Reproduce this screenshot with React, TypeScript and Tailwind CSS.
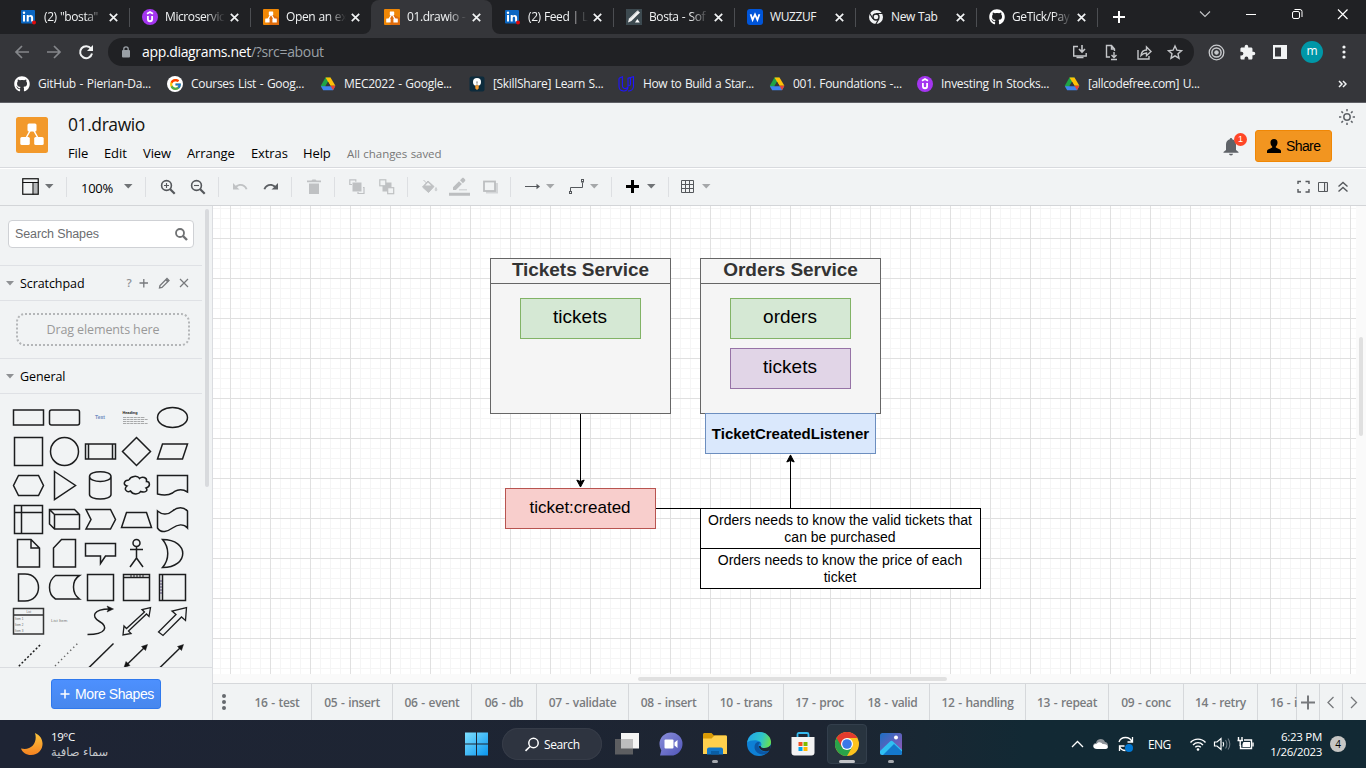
import React from "react";
import { FaGithub } from "react-icons/fa";
import { FcGoogle } from "react-icons/fc";

const UI = "font-['Open_Sans','Noto_Sans',sans-serif]";
const ARIAL = "font-['Liberation_Sans',sans-serif]";

/* ---------- brand icons ---------- */

const LinkedIn = () => (
  <svg width="16" height="16" viewBox="0 0 16 16" className="shrink-0">
    <rect x="0" y="1" width="14" height="13.5" rx="1" fill="#0a66c2" />
    <rect x="2" y="6" width="2" height="6.5" fill="#fff" />
    <circle cx="3" cy="3.8" r="1.2" fill="#fff" />
    <path d="M5.7 12.5V6h2v.9c.9-1.5 4.4-1.5 4.4 1.7v3.9h-2V9c0-1.8-2.4-1.7-2.4 0v3.5z" fill="#fff" />
    <circle cx="13" cy="13.6" r="2" fill="#e00b0b" />
  </svg>
);

const Udemy = () => (
  <svg width="16" height="16" viewBox="0 0 16 16" className="shrink-0">
    <circle cx="8" cy="8" r="8" fill="#a435f0" />
    <path d="M5 4.8 8 3l3 1.8M5.9 7v3.2c0 2.7 4.2 2.7 4.2 0V7" fill="none" stroke="#fff" strokeWidth="1.8" />
  </svg>
);

const DrawioSmall = () => (
  <svg width="16" height="16" viewBox="0 0 16 16" className="shrink-0">
    <rect width="16" height="16" rx="1" fill="#f08705" />
    <path d="M16 9v7H7l-3-3 4-8z" fill="#df6c0c" />
    <path d="M8 5 4.5 11M8 5l3.5 6" stroke="#fff" strokeWidth="1.3" />
    <rect x="5.8" y="2.5" width="4.4" height="3.8" rx=".5" fill="#fff" />
    <rect x="2.2" y="9.6" width="4.4" height="3.8" rx=".5" fill="#fff" />
    <rect x="9.4" y="9.6" width="4.4" height="3.8" rx=".5" fill="#fff" />
  </svg>
);

const BostaIcon = () => (
  <svg width="16" height="16" viewBox="0 0 16 16" className="shrink-0">
    <rect width="16" height="16" fill="#3d4a50" />
    <path d="M2 13.5 3 9.5l8.5-8 2.5 2-8.6 8.6z" fill="#f4f4f4" />
    <path d="m4 9.5 8-8" stroke="#b9bdbf" strokeWidth="1" />
    <path d="M9 13.5h4.8L11.4 10z" fill="#fff" />
  </svg>
);

const Wuzzuf = () => (
  <svg width="16" height="16" viewBox="0 0 16 16" className="shrink-0">
    <rect width="16" height="16" rx="3" fill="#0055d9" />
    <path d="m3.6 5.2 2 5.6L8 5.4l2.4 5.4 2-5.6" fill="none" stroke="#fff" strokeWidth="1.8" />
  </svg>
);

const ChromeGray = () => (
  <svg width="16" height="16" viewBox="0 0 16 16" className="shrink-0">
    <circle cx="8" cy="8" r="7" fill="#f1f3f4" />
    <circle cx="8" cy="8" r="3.7" fill="#202124" />
    <circle cx="8" cy="8" r="2.3" fill="#f1f3f4" />
    <path d="M8 4.5h7M4.9 9.7 1.5 4M11 9.7 7.6 15.5" stroke="#202124" strokeWidth="1.2" />
  </svg>
);

const Drive = () => (
  <svg width="16" height="16" viewBox="0 0 16 16" className="shrink-0">
    <path d="M5.5 1.5h5L8 6 3.3 14 .8 9.7z" fill="#1ea446" />
    <path d="M5.5 1.5h5l4.9 8.3h-5z" fill="#ffc107" />
    <path d="M3.2 14.3.9 10.2h14.4L13 14.3z" fill="#3f83f0" />
    <path d="M10.5 9.8h4.9L13 14.3z" fill="#ea4335" />
    <path d="m8 5.8 2.5 4.2h-5z" fill="#35363a" />
  </svg>
);

const Bulb = () => (
  <svg width="16" height="16" viewBox="0 0 16 16" className="shrink-0">
    <rect x=".5" y=".5" width="15" height="15" rx="2" fill="#0d2b3c" />
    <circle cx="8" cy="6" r="4" fill="#fff" />
    <path d="M6.3 9h3.4v3.5L8 14l-1.700-1.500z" fill="#f29a2e" />
    <path d="M7 6h2M8 6v4" stroke="#888" strokeWidth=".8" />
  </svg>
);

const Udacity = () => (
  <svg width="17" height="16" viewBox="0 0 17 16" className="shrink-0">
    <path
      d="M1 2.2 4.4.8v9c0 2.8 3.6 3.8 5.3 1.4M1 2.2v8c0 5.8 9 6.8 9 .6V2.2L15.5.8v9.4c0 3-2.7 4.8-5.5 4.8M10 8c0 2 2.5 2 2.5 0V1.5"
      fill="none"
      stroke="#2015ff"
      strokeWidth="1.1"
    />
  </svg>
);

/* ---------- browser ---------- */

const X = ({ c = "" }: { c?: string }) => (
  <svg width="9" height="9" viewBox="0 0 9 9" className={`shrink-0 ${c}`}>
    <path d="m.8.8 7.4 7.4M8.2.8.8 8.2" stroke="#f1f3f4" strokeWidth="1.7" />
  </svg>
);

const GithubIcon = () => <FaGithub size={16} color="#fff" className="shrink-0" />;

const tabs: { icon: React.FC; title: string; sep?: boolean; active?: boolean; fade?: boolean }[] = [
  { icon: LinkedIn, title: '(2) "bosta"', sep: true, fade: true },
  { icon: Udemy, title: "Microservic", sep: true, fade: true },
  { icon: DrawioSmall, title: "Open an ex", sep: true, fade: true },
  { icon: DrawioSmall, title: "01.drawio -", active: true, fade: true },
  { icon: LinkedIn, title: "(2) Feed | L", sep: true, fade: true },
  { icon: BostaIcon, title: "Bosta - Sof", sep: true, fade: true },
  { icon: Wuzzuf, title: "WUZZUF", sep: true },
  { icon: ChromeGray, title: "New Tab", sep: true },
  { icon: GithubIcon, title: "GeTick/Pay", sep: true, fade: true },
];

const TabStrip = () => (
  <div className="flex h-[34px] bg-[#202124] pl-[8px]">
    {tabs.map((t, i) => {
      const Icon = t.icon;
      const hasSep = t.sep && i !== 2;
      return (
        <div
          key={i}
          className={`relative flex h-[34px] w-[121px] shrink-0 items-center pl-[13px] ${t.active ? "rounded-t-[8px] bg-[#35363a]" : ""}`}
        >
          {t.active && (
            <>
              <svg className="absolute -left-2 bottom-0" width="8" height="8"><path d="M8 0v8H0a8 8 0 0 0 8-8z" fill="#35363a" /></svg>
              <svg className="absolute -right-2 bottom-0" width="8" height="8"><path d="M0 0v8h8a8 8 0 0 1-8-8z" fill="#35363a" /></svg>
            </>
          )}
          <Icon />
          <span
            className={`ml-[7px] w-[60px] whitespace-nowrap text-[12px] leading-[16px] tracking-[-0.4px] text-[#f1f3f4] [word-spacing:0.5px] ${
              t.fade ? "[mask-image:linear-gradient(to_right,black_68%,transparent_100%)]" : ""
            }`}
          >
            {t.title}
          </span>
          <X c="ml-[5px]" />
          {hasSep && <span className="absolute right-[-1px] top-[8px] h-[19px] w-px bg-[#4c4e52]" />}
        </div>
      );
    })}
    <svg width="14" height="14" viewBox="0 0 14 14" className="ml-[15px] mt-[10px]">
      <path d="M7 1v12M1 7h12" stroke="#fff" strokeWidth="2" />
    </svg>
    <svg width="160" height="30" viewBox="0 0 160 30" className="ml-[73px]" fill="none" stroke="#fff">
      <path d="m1 11.500 5 5 5-5" stroke="#c4c6c8" strokeWidth="1.1" />
      <path d="M47 14.500h10" />
      <rect x="93.500" y="11.500" width="7" height="7" rx="1.500" />
      <path d="M95.500 9.500h5.500a2 2 0 0 1 2 2v5.500" />
      <path d="m139 9.500 9.500 9.500m0-9.500L139 19" strokeWidth="1.2" />
    </svg>
  </div>
);

const AddressBar = () => (
  <div className="flex h-9 items-center bg-[#35363a]">
    <svg width="80" height="20" viewBox="0 0 80 20" className="ml-[14px] shrink-0" fill="none">
      <path d="M15 10H2m6-6-6 6 6 6" stroke="#85878b" strokeWidth="1.700" />
      <path d="M33 10h13m-6-6 6 6-6 6" stroke="#85878b" strokeWidth="1.700" />
      <path d="M77 6.600A6 6 0 1 0 78 11.500" stroke="#f1f3f4" strokeWidth="2" />
      <path d="M79 3v6h-6z" fill="#f1f3f4" />
    </svg>
    <div className="ml-[14px] flex h-7 w-[1086px] shrink-0 items-center rounded-full bg-[#202124] pl-[13px]">
      <svg width="10" height="12" viewBox="0 0 10 12" className="shrink-0">
        <rect x="1" y="4" width="8" height="7.500" rx="1" fill="#9aa0a6" />
        <path d="M2.800 4.500V3a2.200 2.200 0 0 1 4.400 0v1.500" fill="none" stroke="#9aa0a6" strokeWidth="1.300" />
      </svg>
      <span className="ml-[11px] w-[930px] text-[14px] leading-5 tracking-[-0.34px] text-white">
        app.diagrams.net<span className="text-[#9aa0a6]">/?src=about</span>
      </span>
      <svg width="112" height="18" viewBox="0 0 112 18" className="shrink-0" fill="none" stroke="#c4c6c9" strokeWidth="1.400">
        <path d="M6 3.500H1.700v9.500h12.500V10" />
        <path d="M4.500 14.500h7M10 2v6.500M7 6l3 3 3-3" strokeWidth="1.600" />
        <path d="M38 14h-3.500V2.500h5l3 3.500V8M39.500 2.500V6H42" />
        <path d="M42 9v5.500M39.500 12l2.500 2.500 2.500-2.500M39 16.500h6" />
        <path d="M66 7v9h11v-3" />
        <path d="M69 12.500c.5-4 2.500-5.500 5.500-5.500V4l4.500 4.500-4.500 4.200V10c-3 0-4 1-5.500 2.500z" />
        <path d="m104 3 1.900 4.200 4.600.5-3.500 3 1 4.500-4-2.400-4 2.400 1-4.500-3.500-3 4.600-.5z" transform="translate(-1 0)" />
      </svg>
    </div>
    <svg width="17" height="17" viewBox="0 0 17 17" className="ml-[14px] shrink-0" fill="none" stroke="#c8cacd">
      <circle cx="8.500" cy="8.500" r="7.300" strokeWidth="1.300" />
      <circle cx="8.500" cy="8.500" r="4.600" strokeWidth="1.500" />
      <circle cx="8.500" cy="8.500" r="1.800" fill="#c8cacd" />
    </svg>
    <svg width="17" height="17" viewBox="0 0 24 24" className="ml-[14px] shrink-0">
      <path fill="#f1f3f4" d="M20.500 11H19V7c0-1.100-.9-2-2-2h-4V3.500a2.500 2.500 0 0 0-5 0V5H4c-1.100 0-2 .9-2 2v3.800h1.500a2.700 2.700 0 0 1 0 5.400H2V20c0 1.100.9 2 2 2h3.800v-1.500a2.700 2.700 0 0 1 5.400 0V22H17c1.100 0 2-.9 2-2v-4h1.500a2.500 2.500 0 0 0 0-5z" />
    </svg>
    <svg width="14" height="14" viewBox="0 0 14 14" className="ml-[17px] shrink-0">
      <path d="M0 0h14v14H0zM2 2.500v9h6v-9z" fill="#f1f3f4" fillRule="evenodd" />
    </svg>
    <span className="ml-[14px] flex h-[22px] w-[22px] shrink-0 items-center justify-center rounded-full bg-[#0097a7] pb-[2px] text-[12px] leading-none text-white">m</span>
    <svg width="4" height="14" viewBox="0 0 4 14" className="ml-[19px] shrink-0" fill="#f1f3f4">
      <circle cx="2" cy="2" r="1.600" /><circle cx="2" cy="7" r="1.600" /><circle cx="2" cy="12" r="1.600" />
    </svg>
  </div>
);

const bookmarks: { icon: React.ReactNode; label: string; w: string; t?: string }[] = [
  { icon: <GithubIcon />, label: "GitHub - Pierian-Da...", w: "w-[153px]" },
  { icon: <span className="flex h-4 w-4 shrink-0 items-center justify-center rounded-full bg-white"><FcGoogle size={13} /></span>, label: "Courses List - Goog...", w: "w-[153px]" },
  { icon: <Drive />, label: "MEC2022 - Google...", w: "w-[149px]" },
  { icon: <Bulb />, label: "[SkillShare] Learn S...", w: "w-[149px]", t: "tracking-[-0.33px]" },
  { icon: <Udacity />, label: "How to Build a Star...", w: "w-[151px]", t: "tracking-[-0.4px]" },
  { icon: <Drive />, label: "001. Foundations -...", w: "w-[148px]" },
  { icon: <Udemy />, label: "Investing In Stocks...", w: "w-[147px]" },
  { icon: <Drive />, label: "[allcodefree.com] U...", w: "w-[274px]", t: "tracking-[-0.36px]" },
];

const BookmarksBar = () => (
  <div className="flex h-8 items-center bg-[#35363a] pb-[4px] pl-[14px]">
    {bookmarks.map((b, i) => (
      <div key={i} className={`flex shrink-0 items-center gap-[8px] ${b.w}`}>
        {b.icon}
        <span className={`whitespace-nowrap text-[12px] leading-4 text-[#f1f3f4] [word-spacing:0.8px] ${b.t || "tracking-[-0.28px]"}`}>{b.label}</span>
      </div>
    ))}
    <svg width="9" height="8" viewBox="0 0 9 8" fill="none" stroke="#f1f3f4" strokeWidth="1.500">
      <path d="m1 1 3 3-3 3M5 1l3 3-3 3" />
    </svg>
  </div>
);

/* ---------- editor header ---------- */

const menus = [
  ["File", "w-[36px]"],
  ["Edit", "w-[39px]"],
  ["View", "w-[44px]"],
  ["Arrange", "w-[64px]"],
  ["Extras", "w-[52px]"],
  ["Help", "w-[44px]"],
];

const EditorHeader = () => (
  <div className="flex h-[65px] border-b border-[#d8dade] bg-[#f1f3f4]">
    <svg width="32" height="36" viewBox="0 0 32 36" className="ml-[16px] mt-[14px] shrink-0">
      <rect width="32" height="36" rx="2.500" fill="#f2992b" />
      <path d="M15 12 9.500 22M17 12l5.500 10" stroke="#fff" strokeWidth="1.500" />
      <rect x="11.500" y="6.500" width="9" height="8" rx="1.500" fill="#fff" />
      <rect x="4.300" y="20" width="9.500" height="8" rx="1.500" fill="#fff" />
      <rect x="18.200" y="20" width="9.500" height="8" rx="1.500" fill="#fff" />
    </svg>
    <div className="ml-[20px] w-[1155px] shrink-0">
      <div className="mt-[9px] text-[17.500px] leading-6 tracking-[-0.42px] text-[#111]">01.drawio</div>
      <div className="mt-[9px] flex h-[18px] items-center text-[13px] text-black">
        {menus.map(([m, w]) => (
          <span key={m} className={`shrink-0 tracking-[-0.1px] ${w}`}>{m}</span>
        ))}
        <span className="whitespace-nowrap text-[11.500px] tracking-[-0.05px] text-[#777] [word-spacing:0.5px]">All changes saved</span>
      </div>
    </div>
    <div className="relative mt-[33px] h-[24px] w-[32px] shrink-0">
      <svg width="16" height="18" viewBox="0 0 16 18" className="mt-[2px]" fill="#5f6368">
        <path d="M8 0c.8 0 1.200.6 1.200 1.300C11.800 2 13 4 13 6.500V12l2.500 2v.7H.5V14L3 12V6.500C3 4 4.200 2 6.800 1.300 6.800.6 7.200 0 8 0z" />
        <path d="M6 15.800h4a2 1.600 0 0 1-4 0z" />
      </svg>
      <span className="absolute left-[11px] top-[-3px] flex h-[13px] w-[13px] items-center justify-center rounded-full bg-[#ff4627] font-['Liberation_Sans',sans-serif] text-[9px] leading-none text-white">1</span>
    </div>
    <div className={`mt-[27px] flex h-8 w-[77px] shrink-0 items-center rounded-[3px] border border-[#f08705] bg-[#f29520] pl-[11px] text-[14px] text-black ${ARIAL}`}>
      <svg width="14" height="14" viewBox="0 0 14 14" className="shrink-0">
        <path d="M7 0c2.300 0 3.500 1.500 3.500 3.500S9.500 7 8.800 7.600v1L13 10.500c.7.400 1 1 1 1.700V14H0v-1.800c0-.7.300-1.300 1-1.700l4.200-1.900v-1C4.500 7 3.500 5.500 3.500 3.500S4.700 0 7 0z" />
      </svg>
      <span className="ml-[5px] tracking-[-0.6px]">Share</span>
    </div>
    <svg width="16" height="16" viewBox="0 0 16 16" className="ml-[7px] mt-[6px] shrink-0" fill="none" stroke="#5f6368" strokeWidth="1.500">
      <circle cx="8" cy="8" r="3.200" />
      <path d="M8 0v2.300M8 13.700V16M0 8h2.300M13.700 8H16M2.400 2.400 4 4M12 12l1.600 1.600M13.600 2.400 12 4M4 12l-1.600 1.600" />
    </svg>
  </div>
);

/* ---------- toolbar ---------- */

const Caret = ({ c, dim }: { c: string; dim?: boolean }) => (
  <svg width="9" height="5" viewBox="0 0 9 5" className={`mr-[-1px] shrink-0 ${c}`}>
    <path d="M0 0h8.500L4.250 4.600z" fill={dim ? "#a5a7a9" : "#707376"} />
  </svg>
);
const Sep = ({ c }: { c: string }) => <span className={`h-[20px] w-px shrink-0 bg-[#dddfe2] ${c}`} />;

const Toolbar = () => (
  <div className="flex h-[38px] items-center border-b border-t border-b-[#d3d5d8] border-t-white bg-[#f1f3f4] pb-px pl-[22px]">
    <svg width="17" height="17" viewBox="0 0 17 17" className="shrink-0" fill="none" stroke="#111">
      <rect x="11.500" y="4.500" width="4.500" height="11.500" fill="#b5b7b9" stroke="none" />
      <rect x=".75" y=".75" width="15.500" height="15.500" strokeWidth="1.200" />
      <path d="M.5 4.500h16M11 4.500v12" strokeWidth="1.100" />
    </svg>
    <Caret c="ml-[6px]" />
    <Sep c="ml-[13px]" />
    <span className="ml-[14px] mt-[4px] w-[34px] shrink-0 text-[13px] tracking-[-0.25px] text-black">100%</span>
    <Caret c="ml-[9px]" />
    <Sep c="ml-[13px]" />
    <svg width="16" height="16" viewBox="0 0 16 16" className="ml-[14px] shrink-0" fill="none" stroke="#55585c">
      <circle cx="6.500" cy="6.500" r="4.900" strokeWidth="1.600" /><path d="m10 10 4.700 4.700" strokeWidth="2.200" /><path d="M4 6.500h5M6.500 4v5" strokeWidth="1.100" />
    </svg>
    <svg width="16" height="16" viewBox="0 0 16 16" className="ml-[14px] shrink-0" fill="none" stroke="#55585c">
      <circle cx="6.500" cy="6.500" r="4.900" strokeWidth="1.600" /><path d="m10 10 4.700 4.700" strokeWidth="2.200" /><path d="M4 6.500h5" strokeWidth="1.100" />
    </svg>
    <Sep c="ml-[12px]" />
    <svg width="16" height="10" viewBox="0 0 16 10" className="ml-[13px] shrink-0">
      <path d="M1 1v6.500h6.500L5 5.200c3-2.500 7-1.500 8.700 2.300L15.500 7C13.500 2 8 .5 3.700 3.800z" fill="#c0c2c4" />
    </svg>
    <svg width="16" height="10" viewBox="0 0 16 10" className="ml-[15px] shrink-0">
      <path d="M15 1v6.500H8.500L11 5.200C8 2.700 4 3.700 2.300 7.500L.5 7C2.500 2 8 .5 12.300 3.800z" fill="#5c5f63" />
    </svg>
    <Sep c="ml-[12px]" />
    <svg width="14" height="16" viewBox="0 0 14 16" className="ml-[15px] shrink-0" fill="#bfc1c3">
      <path d="M0 1.500h4.500L5.500.5h3l1 1H14v1.700H0zM2 4.500h10V15H2z" />
    </svg>
    <Sep c="ml-[13px]" />
    <svg width="16" height="16" viewBox="0 0 16 16" className="ml-[14px] shrink-0" fill="none" stroke="#bfc1c3">
      <path d="M3 5.500H.8V.8h6v2" strokeWidth="1.200" /><rect x="3.500" y="3.500" width="9" height="9" fill="#bfc1c3" stroke="none" /><path d="M14 8.500h1v6H9V13" strokeWidth="1.200" />
    </svg>
    <svg width="16" height="16" viewBox="0 0 16 16" className="ml-[14px] shrink-0" fill="none" stroke="#bfc1c3">
      <path d="M3.500 3.500h9v9h-9z" fill="#bfc1c3" stroke="none" /><rect x=".8" y=".8" width="6" height="6" strokeWidth="1.200" fill="#f1f3f4" /><rect x="8.700" y="8.700" width="6" height="6" strokeWidth="1.200" fill="#f1f3f4" />
    </svg>
    <Sep c="ml-[12px]" />
    <svg width="16" height="16" viewBox="0 0 16 16" className="ml-[14px] shrink-0">
      <path d="m1.500 1 5 5M6 2l6 5.500-5.500 6L.5 8z" fill="#bfc1c3" stroke="#bfc1c3" /><path d="m6 3.500 3.200 3H3.200z" fill="#f1f3f4" /><path d="M14 8.500c3 4.500-3 4.500 0 0z" fill="#cfd1d3" stroke="#cfd1d3" />
    </svg>
    <svg width="21" height="19" viewBox="0 0 21 19" className="ml-[11px] shrink-0" fill="#bcbec0">
      <path d="M0 15.700h21v3H0zM4 13V10.200l6-6 2.900 2.900-6 6zM11 3.300l2-2c.6-.6 1.300-.6 1.900 0l1 1c.6.6.6 1.300 0 1.900l-2 2zM10 12.500h8v.8h-8z" />
    </svg>
    <svg width="16" height="14" viewBox="0 0 16 14" className="mr-[-1px] ml-[13px] shrink-0">
      <rect x="3" y="3" width="12" height="10.500" fill="#d3d5d7" /><rect x="1" y="1.500" width="11" height="9.500" fill="#f1f3f4" stroke="#bcbec0" strokeWidth="1.800" />
    </svg>
    <Sep c="ml-[12px]" />
    <svg width="15" height="7" viewBox="0 0 15 7" className="ml-[14px] shrink-0">
      <path d="M0 3.500h12" stroke="#55585c" /><path d="m11.500.7 3.500 2.800-3.500 2.800z" fill="#55585c" />
    </svg>
    <Caret c="ml-[6px]" dim />
    <svg width="15" height="16" viewBox="0 0 15 16" className="ml-[15px] shrink-0" fill="none" stroke="#55585c">
      <path d="M1.500 12.500V8.500h12V3.500" /><rect x=".5" y="12.500" width="2" height="2" /><rect x="12.500" y=".5" width="2" height="2.500" />
    </svg>
    <Caret c="ml-[6px]" dim />
    <Sep c="ml-[13px]" />
    <svg width="13" height="13" viewBox="0 0 13 13" className="ml-[14px] shrink-0"><path d="M6.500 0v13M0 6.500h13" stroke="#000" strokeWidth="3" /></svg>
    <Caret c="ml-[8px]" />
    <Sep c="ml-[13px]" />
    <svg width="13" height="13" viewBox="0 0 13 13" className="ml-[12px] shrink-0" fill="none" stroke="#55585c"><path d="M.5.5h12v12H.5zM4.500.5v12M8.500.5v12M.5 4.500h12M.5 8.500h12" /></svg>
    <Caret c="ml-[8px]" dim />
    <svg width="52" height="14" viewBox="0 0 52 14" className="ml-[587px] shrink-0" fill="none" stroke="#55585c">
      <path d="M1 4V1.500h3M8.500 1.500H12V4M12 9v3H8.500M4 12H1V9" strokeWidth="1.400" />
      <path d="M21.500 2.500h9v9h-9zM27.500 2.500v9" /><path d="M28 3h2v8h-2z" fill="#dcdde0" stroke="none" />
      <path d="m41.500 6.500 4.500-4 4.500 4M41.500 11.500l4.500-4 4.500 4" strokeWidth="1.400" />
    </svg>
  </div>
);

/* ---------- sidebar ---------- */

const tiny = "font-['Liberation_Sans',sans-serif]";
const shapes: React.ReactNode[] = [
  <rect x="3.500" y="10" width="30" height="15" />,
  <rect x="3.500" y="10" width="30" height="15" rx="2" />,
  <text x="13" y="19" fontSize="5" fontWeight="700" fill="#6d8cc0" stroke="none" className={tiny}>Text</text>,
  <g stroke="none" className={tiny}>
    <text x="4.500" y="13.500" fontSize="3.800" fontWeight="700" fill="#111">Heading</text>
    <path d="M5 17.500h22M5 19.500h25M5 21.500h21M5 23.500h25" stroke="#777" strokeWidth=".6" strokeDasharray="3 .6" />
  </g>,
  <ellipse cx="18.500" cy="17.500" rx="15" ry="10" />,
  <rect x="4.500" y="3.500" width="28" height="28" />,
  <circle cx="18.500" cy="17.500" r="14" />,
  <path d="M3.500 10h30v15h-30zM6.500 10v15M30.500 10v15" />,
  <path d="m18.500 3.500 14 14-14 14-14-14z" />,
  <path d="M8.500 10h25l-5 15h-25z" />,
  <path d="M8.500 7.500h20l5 10-5 10h-20l-5-10z" />,
  <path d="m8.500 3.500 21 14-21 14z" />,
  <path d="M7.500 8.500v18c0 6 21.500 6 21.500 0v-18M7.500 8.500c0-6.500 21.500-6.500 21.500 0s-21.500 6.500-21.500 0" />,
  <path d="M11 12c-5 0-6.500 4.500-2 6-4 3 0 7 3.500 5 2.500 4 8.500 3.500 10 .5 5 1.500 8-1 5.500-3.500 5-1.500 4-6.500.5-6.500 1-4-4.500-5.500-7-3-2-3.500-9-2.500-10.500 1.500" />,
  <path d="M3.500 26V7.500h30V24c-8-5-14 0-15 1-5 3-11 2-15 1z" />,
  <path d="M4.500 3.500h28v28h-28zM11.500 3.500v28M4.500 10.500h28" />,
  <path d="M3.500 7.500h25l5 5V27h-25l-5-5zM3.500 7.500l5 5h25M8.500 12.500V27" />,
  <path d="M4 7.500h24.500l5 10-5 9.500H4l5-9.500z" />,
  <path d="M8.500 10.500h20l5 15h-30z" />,
  <path d="M3.500 9c4 3.500 10 4.500 15 0s11-4.500 15 0v17c-4-4.500-10-3.500-15 0s-11 6-15 0z" />,
  <path d="M7.500 3.500H21l8.500 8.500v19h-22zM21 3.500V12h8.500" />,
  <path d="M15.500 3.500h14v27.500H7.500V12z" />,
  <path d="M3.500 7.500h30V20H23.500l-5 7.500V20h-15z" />,
  <path d="M18.500 11v11M12 13.500h13M18.500 22 12 31M18.500 22l6.500 9M22 7a3.500 3.500 0 1 1-7 0 3.500 3.500 0 0 1 7 0z" />,
  <path d="M8.500 3.500c27 0 27 28 0 28 7-8 7-20 0-28z" />,
  <path d="M8.500 4H15c18 0 18 27 0 27H8.500z" />,
  <path d="M9.500 5.500h24c-8 5-8 18 0 23.500h-24c-8-5-8-18 0-23.500z" />,
  <rect x="5.500" y="4.500" width="26" height="26" />,
  <g><path d="M5.500 4.500h26v26h-26zM5.500 7.500h26" /><path d="M12 6h14" strokeWidth="1" strokeDasharray="2 1" /></g>,
  <g><path d="M5.500 4.500h26v26h-26zM8.500 4.500v26" /><path d="M7 10v14" stroke="#514371" strokeWidth="1" strokeDasharray="2 1" /></g>,
  <g className={tiny}>
    <path d="M3.500 4.500h30V30h-30zM3.500 11h30" stroke="#333" />
    <g fontSize="3" fill="#666" stroke="none"><text x="16.500" y="8.700">List</text><text x="5" y="15.500">Item 1</text><text x="5" y="21.500">Item 2</text><text x="5" y="27.500">Item 3</text></g>
  </g>,
  <text x="5" y="18" fontSize="4.300" fill="#777" stroke="none" className={tiny}>List Item</text>,
  <g><path d="M5.500 30.500c19 0 21-8 12-13s-6-12.500 10-12.500" /><path d="m25 2 6.500 3-6.500 3 1.500-3z" fill="#111" strokeWidth=".5" /></g>,
  <path d="m5 31 1-9 2.500 2.500L26.500 8 24 5.500l8.500-2-1.500 9-2.500-2.500-18 17 2.500 2.500z" strokeWidth="1.300" />,
  <path d="m4.500 28 17.500-17.500-4-3.500L32.500 3.500l-1 13-4-3.500L9 31.500z" strokeWidth="1.300" />,
  <path d="M6 31 31.500 5.500" strokeDasharray="2 2" />,
  <path d="M6 31 31.500 5.500" strokeDasharray="1.300 3" stroke="#666" />,
  <path d="M5.500 31 31.500 5.500" />,
  <g><path d="M8.500 27 27 9" /><path d="m29.500 6.500-2 6-4-4zM6 29.500l2-6 4 4z" fill="#111" strokeWidth=".5" /></g>,
  <g><path d="M6 29.500 27 9" /><path d="m29.500 6.500-2 6-4-4z" fill="#111" strokeWidth=".5" /></g>,
];

const SectionTitle = ({ label, children }: { label: string; children?: React.ReactNode }) => (
  <div className="flex h-[34px] items-center pl-[6px]">
    <svg width="8" height="5" viewBox="0 0 8 5"><path d="M0 0h8L4 4.500z" fill="#8f9194" /></svg>
    <span className="ml-[6px] w-[106px] pt-[2px] text-[12.500px] font-medium tracking-[-0.08px] text-black">{label}</span>
    {children}
  </div>
);

const Sidebar = () => (
  <div className="flex w-[213px] shrink-0 flex-col border-r border-[#dadce0] bg-[#f1f3f4]">
    <div className="relative h-[461px] overflow-hidden">
      <div className="w-[202px]">
        <div className="h-[60px] border-b border-[#dfe1e5] pl-[8px] pt-[14px] box-border">
          <div className={`flex h-[28px] w-[186px] items-center rounded-[4px] border border-[#cfd1d5] bg-white pl-[6px] ${ARIAL}`}>
            <span className="w-[160px] shrink-0 text-[12.500px] tracking-[-0.12px] text-[#6b6d70]">Search Shapes</span>
            <svg width="13" height="13" viewBox="0 0 13 13" fill="none" stroke="#707274"><circle cx="5" cy="5" r="4" strokeWidth="1.800" /><path d="m8 8 4 4" strokeWidth="2.400" /></svg>
          </div>
        </div>
        <div className="border-b border-[#dfe1e5]">
          <SectionTitle label="Scratchpad">
            <svg width="64" height="12" viewBox="0 0 64 12" fill="none" stroke="#77797c">
              <text x=".5" y="10" fontSize="11.500" fontWeight="600" fill="#8f9194" stroke="none">?</text>
              <path d="M13.500 6H22M17.800 2v8.500" strokeWidth="1.300" />
              <path d="m34 8.500-.5 2.500 2.500-.5 7-7L41 1.500z" strokeWidth="1.300" /><path d="m40 2.500 2 2" strokeWidth="2" />
              <path d="m54 2 8 8m0-8-8 8" strokeWidth="1.200" />
            </svg>
          </SectionTitle>
        </div>
        <div className="flex h-[58px] items-center border-b border-[#dfe1e5] pl-[16px]">
          <div className="relative flex h-[33px] w-[174px] items-center justify-center pt-[2px] text-[12.500px] tracking-[-0.12px] text-[#999]">
            <svg className="absolute inset-0" width="174" height="33" fill="none"><rect x="1" y="1" width="172" height="31" rx="8" stroke="#b4b6b8" strokeWidth="2" strokeDasharray="2 2" /></svg>
            Drag elements here
          </div>
        </div>
        <div className="border-b border-[#dfe1e5]"><SectionTitle label="General" /></div>
        <div className="ml-[10px] mt-[6px] grid grid-cols-[repeat(5,36px)] auto-rows-[34px]">
          {shapes.map((s, i) => (
            <svg key={i} width="36" height="34" viewBox="0 0 36 34" fill="none" stroke="#1c1d1e" strokeWidth="1.500">{s}</svg>
          ))}
        </div>
      </div>
      <span className="absolute left-[205px] top-[3px] h-[278px] w-[4px] rounded-full bg-[#d8dadd]" />
    </div>
    <div className="flex flex-1 border-t border-[#dadce0] pl-[51px] pt-[11px]">
      <div className={`flex h-[30px] w-[110px] items-center rounded-[3px] border border-[#3079ed] bg-gradient-to-b from-[#4d90fe] to-[#4787ed] pl-[8px] text-[14px] text-white ${ARIAL}`}>
        <svg width="10" height="10" viewBox="0 0 10 10" className="shrink-0"><path d="M5 .5v9M.5 5h9" stroke="#fff" strokeWidth="1.500" /></svg>
        <span className="ml-[5px] whitespace-nowrap tracking-[-0.4px]">More Shapes</span>
      </div>
    </div>
  </div>
);

/* ---------- canvas ---------- */

const node = "absolute flex items-center justify-center border";

const Canvas = () => (
  <div className={`relative h-[468px] w-[1143px] overflow-hidden bg-white ${ARIAL}`}>
    <div className="absolute inset-0 bg-[linear-gradient(to_right,#f5f5f5_1px,transparent_1px),linear-gradient(to_bottom,#f5f5f5_1px,transparent_1px)] bg-[length:10px_10px] bg-[position:7px_2px]" />
    <div className="absolute inset-0 bg-[linear-gradient(to_right,#e0e0e0_1px,transparent_1px),linear-gradient(to_bottom,#e0e0e0_1px,transparent_1px)] bg-[length:40px_40px] bg-[position:17px_32px]" />

    <div className="absolute left-[277px] top-[52px] h-[156px] w-[181px] border border-[#666] bg-[#f5f5f5]">
      <div className="h-[25px] border-b border-[#666] text-center text-[19px] font-bold leading-[22px] tracking-[-0.06px] text-[#333]">Tickets Service</div>
    </div>
    <div className="absolute left-[487px] top-[52px] h-[156px] w-[181px] border border-[#666] bg-[#f5f5f5]">
      <div className="h-[25px] border-b border-[#666] text-center text-[19px] font-bold leading-[22px] tracking-[-0.06px] text-[#333]">Orders Service</div>
    </div>

    <div className={`${node} left-[307px] top-[92px] h-[41px] w-[121px] border-[#82b366] bg-[#d5e8d4] pb-[2px] pr-px text-[19px]`}>tickets</div>
    <div className={`${node} left-[517px] top-[92px] h-[41px] w-[121px] border-[#82b366] bg-[#d5e8d4] pb-[2px] pr-px text-[19px]`}>orders</div>
    <div className={`${node} left-[517px] top-[142px] h-[41px] w-[121px] border-[#9673a6] bg-[#e1d5e7] pb-[2px] pr-px text-[19px]`}>tickets</div>
    <div className={`${node} left-[492px] top-[207px] h-[41px] w-[171px] border-[#6c8ebf] bg-[#dae8fc] pt-px text-[15px] font-bold`}>TicketCreatedListener</div>
    <div className={`${node} left-[292px] top-[282px] h-[41px] w-[151px] border-[#b85450] bg-[#f8cecc] pb-[2px] pr-px text-[17px]`}>ticket:created</div>

    <svg className="absolute left-0 top-0" width="700" height="320" fill="none" stroke="#000">
      <path d="M367.500 208v70M443 302.500h134.500V252" />
      <path d="m367.500 281-3.700-7 3.700 1.500 3.700-1.500zM577.500 249l-3.700 7 3.700-1.500 3.700 1.500z" fill="#000" />
    </svg>

    <div className="absolute left-[487px] top-[302px] flex h-[81px] w-[281px] flex-col border border-black bg-white text-center text-[14px] leading-[17px]">
      <div className="h-[40px] border-b border-black px-[5px] pr-[6px] pt-[3px]">Orders needs to know the valid tickets that can be purchased</div>
      <div className="px-[5px] pr-[6px] pt-[3px]">Orders needs to know the price of each ticket</div>
    </div>
  </div>
);

const pages = [
  ["16 - test", "w-[69px]"],
  ["05 - insert", "w-[81px]"],
  ["06 - event", "w-[79px]"],
  ["06 - db", "w-[65px]"],
  ["07 - validate", "w-[92px]"],
  ["08 - insert", "w-[80px]"],
  ["10 - trans", "w-[75px]"],
  ["17 - proc", "w-[72px]"],
  ["18 - valid", "w-[74px]"],
  ["12 - handling", "w-[96px]"],
  ["13 - repeat", "w-[83px]"],
  ["09 - conc", "w-[75px]"],
  ["14 - retry", "w-[74px]"],
];

const PageTabs = () => (
  <div className="flex h-[37px] overflow-hidden border-t border-[#d6d8db] bg-[#f1f3f4] text-[12px] font-semibold tracking-[-0.35px] text-[#7a7c7f] [word-spacing:1px]">
    <svg width="30" height="36" viewBox="0 0 30 36" className="shrink-0" fill="#666a6e"><circle cx="11" cy="12" r="2" /><circle cx="11" cy="18" r="2" /><circle cx="11" cy="24" r="2" /></svg>
    {pages.map(([p, w], i) => (
      <span key={p + i} className={`flex shrink-0 items-center justify-center border-r border-[#d6d8db] pt-px ${w}`}>{p}</span>
    ))}
    <span className="flex w-[39px] shrink-0 items-center whitespace-nowrap border-r border-[#d6d8db] pl-[12px] pt-px">16 - i</span>
    <svg width="70" height="36" viewBox="0 0 70 36" className="shrink-0" fill="none" stroke="#77797c">
      <path d="M4 18.500h14M11 11.500v14" strokeWidth="2" />
      <path d="M22.500 0v36M45.500 0v36" stroke="#d6d8db" />
      <path d="m36.500 13-5.500 5.500 5.500 5.500M54 13l5.500 5.500L54 24" strokeWidth="1.300" />
    </svg>
  </div>
);

/* ---------- taskbar ---------- */

const task = "relative flex h-12 w-[44px] shrink-0 items-center justify-center";

const Taskbar = () => (
  <div className="flex h-12 items-center bg-gradient-to-r from-[#1e2434] via-[#1d2532] via-60% to-[#122934] to-75% text-white">
    <svg width="24" height="24" viewBox="0 0 24 24" className="ml-[20px] shrink-0">
      <defs><linearGradient id="moon" x1="0" y1="0" x2="0" y2="1"><stop offset="0" stopColor="#fcc63e" /><stop offset="1" stopColor="#f58220" /></linearGradient></defs>
      <path d="M15 1c12 5 9 22-4 22C6 23 2.500 20.500 1 16.500 11 19 18 11 15 1z" fill="url(#moon)" />
    </svg>
    <div className="ml-[7px] w-[404px] shrink-0 text-[11.500px] leading-[15px]">
      <div className="tracking-[-0.4px]">19°C</div>
      <div className="pt-px font-['DejaVu_Sans',sans-serif] text-[11.500px] text-[#c5c8cc]">سماء صافية</div>
    </div>
    <svg width="46" height="24" viewBox="0 0 46 24" className="ml-[9px] mr-[-8px] shrink-0">
      <defs><linearGradient id="win" x1="0" y1="0" x2="1" y2="1"><stop offset="0" stopColor="#7ee0ff" /><stop offset="1" stopColor="#0a95ee" /></linearGradient></defs>
      <path d="M1 .5h11v11H1zM13 .5h11v11H13zM1 12.500h11v11H1zM13 12.500h11v11H13z" fill="url(#win)" />
    </svg>
    <div className="flex h-8 w-[100px] shrink-0 items-center rounded-full bg-[#2e3440] pl-[22px] ring-1 ring-inset ring-[#363c48]">
      <svg width="16" height="15" viewBox="0 0 16 15" fill="none" stroke="#fff"><circle cx="9.500" cy="6" r="4.700" strokeWidth="1.500" /><path d="m6 9.500-4.500 4.300" strokeWidth="1.700" /></svg>
      <span className="ml-[4px] pt-px text-[12px] tracking-[-0.38px]">Search</span>
    </div>
    <div className={`${task} ml-[3px]`}>
      <svg width="24" height="24" viewBox="0 0 24 24"><rect x="6" y="1" width="18" height="15.500" fill="#f4f4f4" /><rect x="0" y="7" width="18" height="15.500" fill="#5d5e61" /><path d="M6 7h12v9.500H6z" fill="#bdbdbe" /></svg>
    </div>
    <div className={task}>
      <svg width="24" height="24" viewBox="0 0 24 24">
        <defs><linearGradient id="chat" x1="0" y1="0" x2="1" y2="1"><stop offset="0" stopColor="#8a8edb" /><stop offset="1" stopColor="#5055b8" /></linearGradient></defs>
        <path d="M.5 12A11.500 11.500 0 1 1 12 23.500H1l1.300-5A11.500 11.500 0 0 1 .5 12z" fill="url(#chat)" />
        <rect x="5.500" y="7.500" width="9" height="9" rx="1" fill="#fff" /><path d="m15.500 10.500 3-2.500v8l-3-2.500z" fill="#fff" />
      </svg>
    </div>
    <div className={task}>
      <svg width="24" height="24" viewBox="0 0 24 24"><path d="M0 2.500C0 1.500.7 1 1.500 1h7l2.500 2.500h12v5H0z" fill="#d99a05" /><path d="M0 6.500h8.500l3-3H23c.7 0 1 .5 1 1V22H0z" fill="#ffd04d" /><path d="M4 22.500v-5c0-1 .7-2 2-2h12c1.300 0 2 1 2 2v5z" fill="#1277c8" /><path d="M8 22.500V19h8v3.500z" fill="#0a5ea5" /></svg>
      <span className="absolute bottom-[5px] h-[3px] w-[6px] rounded-full bg-[#a4a8ae]" />
    </div>
    <div className={task}>
      <svg width="24" height="24" viewBox="0 0 24 24">
        <defs><linearGradient id="edge" x1="0" y1=".3" x2="1" y2=".5"><stop offset="0" stopColor="#22a7e8" /><stop offset=".6" stopColor="#2fc5c9" /><stop offset="1" stopColor="#68df4f" /></linearGradient></defs>
        <circle cx="12" cy="12" r="12" fill="#0e80d5" />
        <path d="M.2 10.500C1.500 3.500 6.500 0 12.500 0 19.500 0 24 5 24 10c0 4-3 6-6.500 6-3 0-4-1-3.500-2 1.500-3-1-5-4-5.500-4-.5-8 .5-9.800 2z" fill="url(#edge)" />
        <path d="M8.500 11.500c-3 5 1 12 9 10.800 2-.4 4-2 5-3.800-5 2.500-11 .5-11-5 0-1.500 1-2.500 2-3-2-1-4-.5-5 1z" fill="#0c57a4" />
        <path d="M13.800 14c-.5 1 .7 2 3.500 2 3 0 5-1 6.500-3 0 3-.8 4.500-1.500 5.500-5 2-10.500-.5-10.500-4.500z" fill="#1e2733" />
      </svg>
    </div>
    <div className={task}>
      <svg width="24" height="24" viewBox="0 0 24 24"><path d="M6.500 5V2.500c0-1 .5-1.500 1.500-1.500h8c1 0 1.500.5 1.500 1.500V5" fill="none" stroke="#35b9ee" strokeWidth="1.800" /><path d="M.5 5h23v15.500c0 2-1 3-3 3h-17c-2 0-3-1-3-3z" fill="#f3f3f3" /><path d="M7.500 10h4v4h-4z" fill="#f25022" /><path d="M12.500 10h4v4h-4z" fill="#7fba00" /><path d="M7.500 15h4v4h-4z" fill="#00a4ef" /><path d="M12.500 15h4v4h-4z" fill="#ffb900" /></svg>
    </div>
    <div className={task}>
      <div className="flex h-10 w-10 items-center justify-center rounded-[4px] border border-[#333f4c] bg-[#28343f]">
        <svg width="24" height="24" viewBox="0 0 24 24">
          <circle cx="12" cy="12" r="12" fill="#fcc31e" />
          <path d="M12 12 1.600 6A12 12 0 0 0 12 24l5.200-9z" fill="#2aa34a" />
          <path d="M1.600 6A12 12 0 0 1 22.400 6H12l-5.200 9z" fill="#e33b2e" />
          <circle cx="12" cy="12" r="6" fill="#fff" /><circle cx="12" cy="12" r="4.800" fill="#3b78e7" />
        </svg>
      </div>
      <span className="absolute bottom-[5px] h-[3px] w-[16px] rounded-full bg-[#c3c5c8]" />
    </div>
    <div className={task}>
      <svg width="22" height="22" viewBox="0 0 22 22">
        <defs><linearGradient id="ph" x1="0" y1="0" x2="1" y2="1"><stop offset="0" stopColor="#1c6fc4" /><stop offset="1" stopColor="#9b55b5" /></linearGradient><clipPath id="pc"><rect width="22" height="22" rx="2.500" /></clipPath></defs>
        <g clipPath="url(#pc)"><rect width="22" height="22" fill="url(#ph)" /><path d="M0 18 10 8.500c1-1 2-1 3 0L22 17v5H0z" fill="#2fc0f3" /><path d="m3 22 11-11 8 7.500V22z" fill="#1478cc" /><circle cx="16" cy="4.500" r="2" fill="#fff" /></g>
      </svg>
      <span className="absolute bottom-[5px] h-[3px] w-[6px] rounded-full bg-[#a4a8ae]" />
    </div>
    <svg width="66" height="20" viewBox="0 0 66 20" className="ml-[156px] shrink-0" fill="none" stroke="#fff">
      <path d="m3 13 5.500-5.500L14 13" strokeWidth="1.300" />
      <path d="M28 14c-5 0-4.500-5-1-5 .5-5 8-5.500 9-1 3.500 0 4.500 6 0 6z" fill="#8c9298" stroke="none" />
      <path d="M28 15c-5 0-4.500-5.500-.5-5 2-3 5-1.500 6 0 6-.5 7 5 3 5z" fill="#fff" stroke="none" />
      <path d="M50 8c2-6 11-6 13 0M63.500 3v5h-5M50.500 17v-5h5M50.500 12.500c1 2.500 3 4 6 4" strokeWidth="1.300" />
      <circle cx="60" cy="14" r="4" fill="#0078d4" stroke="none" />
    </svg>
    <span className="ml-[13px] w-[24px] shrink-0 pt-px text-[12px] tracking-[-0.55px]">ENG</span>
    <svg width="70" height="18" viewBox="0 0 70 18" className="ml-[17px] shrink-0" fill="none" stroke="#fff" strokeWidth="1.400">
      <path d="M1.500 7.500c4-4.500 11-4.500 15 0M4 10c3-3 7-3 10 0M6.300 12.300c1.500-1.500 4-1.500 5.500 0" /><circle cx="9" cy="14.500" r="1.300" fill="#fff" stroke="none" />
      <path d="M25.500 7H28l4-3.500v11L28 11h-2.500zM34 7c1 1.500 1 3 0 4.500" strokeWidth="1.200" /><path d="M36.500 5c2 3 2 5.500 0 8.500M39 3.500c2.500 4 2.500 7.500 0 11" stroke="#707b85" strokeWidth="1.100" />
      <path d="M55 5h7.500v8.500H51.500V10" /><path d="M54.500 7h6.500v5h-7.500V9z" fill="#fff" stroke="none" /><path d="M64 7.500v4M49.500 2v3M53 2v3M48.500 5.500H54M51.200 6v5" />
    </svg>
    <div className="ml-[-4px] w-[67px] shrink-0 text-right text-[11.500px] leading-[15.500px] tracking-[-0.3px]"><div>6:23 PM</div><div>1/26/2023</div></div>
    <span className="ml-[8px] flex h-4 w-4 shrink-0 items-center justify-center rounded-full bg-[#c6c6c4] text-[10px] text-black">4</span>
  </div>
);

export default function App() {
  return (
    <div className={`flex h-[768px] w-[1366px] flex-col overflow-hidden ${UI}`}>
      <TabStrip />
      <AddressBar />
      <BookmarksBar />
      <div className="h-px shrink-0 bg-[#5f6066]" />
      <EditorHeader />
      <Toolbar />
      <div className="flex h-[514px]">
        <Sidebar />
        <div className="flex min-w-0 flex-1 flex-col">
          <div className="flex">
            <Canvas />
            <div className="flex w-[10px] justify-center bg-[#fafafa] pt-[131px]"><span className="h-[99px] w-[4px] rounded-full bg-[#e0e0e0]" /></div>
          </div>
          <div className="h-[9px] bg-[#fafafa] pl-[425px] pt-[3px]"><div className="h-[4px] w-[309px] rounded-full bg-[#e0e0e0]" /></div>
          <PageTabs />
        </div>
      </div>
      <Taskbar />
    </div>
  );
}
